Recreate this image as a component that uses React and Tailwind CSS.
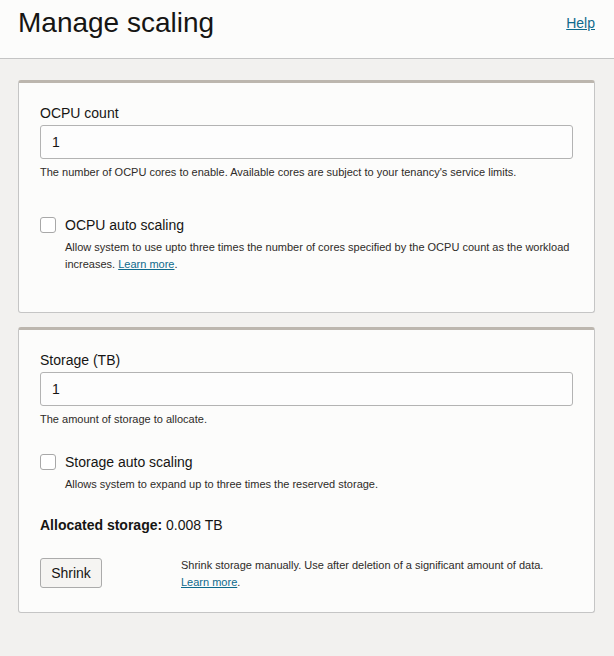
import React from "react";

function Checkbox() {
  return (
    <span className="block w-[16px] h-[16px] shrink-0 rounded-[3px] border border-[#a8a8a8] bg-white" />
  );
}

export default function App() {
  return (
    <div className="min-h-[656px] bg-[#f2f1ef] font-['Liberation_Sans',Arial,sans-serif] text-[#161513]">
      <header className="h-[59px] bg-[#fcfcfb] border-b border-[#c4c4c4] flex justify-between items-start pl-[18px] pr-[19px] pt-[7px]">
        <h1 className="text-[28px] leading-[32px] font-normal">Manage scaling</h1>
        <a href="#" className="mt-[6px] text-[14px] leading-[20px] underline text-[#0f6a8c]">
          Help
        </a>
      </header>

      <main className="pl-[18px] pr-[19px] pt-[21px]">
        <section className="bg-[#fcfcfb] border border-[#c5c5c5] border-t-[3px] border-t-[#bcb6ae] rounded-[3px] px-[21px] pt-[20px] pb-[39px]">
          <label className="block text-[14px] leading-[20px]">OCPU count</label>
          <div className="mt-[2px] h-[34px] rounded-[3px] border border-[#b3b3b3] bg-[#fdfdfd] flex items-center pl-[11px] text-[14px]">
            1
          </div>
          <p className="mt-[5px] text-[11px] leading-[17px] text-[#2e2b28]">
            The number of OCPU cores to enable. Available cores are subject to your tenancy's service limits.
          </p>
          <div className="mt-[34px] flex items-center gap-[9px] text-[14px] leading-[20px]">
            <Checkbox />
            <span>OCPU auto scaling</span>
          </div>
          <p className="mt-[4px] pl-[25px] text-[11px] leading-[17px] text-[#2e2b28]">
            Allow system to use upto three times the number of cores specified by the OCPU count as the workload increases.{" "}
            <a href="#" className="underline text-[#0f6a8c]">Learn more</a>.
          </p>
        </section>

        <section className="mt-[14px] bg-[#fcfcfb] border border-[#c5c5c5] border-t-[3px] border-t-[#bcb6ae] rounded-[3px] px-[21px] pt-[20px] pb-[21px]">
          <label className="block text-[14px] leading-[20px]">Storage (TB)</label>
          <div className="mt-[2px] h-[34px] rounded-[3px] border border-[#b3b3b3] bg-[#fdfdfd] flex items-center pl-[11px] text-[14px]">
            1
          </div>
          <p className="mt-[5px] text-[11px] leading-[17px] text-[#2e2b28]">
            The amount of storage to allocate.
          </p>
          <div className="mt-[24px] flex items-center gap-[9px] text-[14px] leading-[20px]">
            <Checkbox />
            <span>Storage auto scaling</span>
          </div>
          <p className="mt-[4px] pl-[25px] text-[11px] leading-[17px] text-[#2e2b28]">
            Allows system to expand up to three times the reserved storage.
          </p>
          <p className="mt-[22px] text-[14px] leading-[20px]">
            <span className="font-bold">Allocated storage:</span> 0.008 TB
          </p>
          <div className="mt-[22px] flex items-start">
            <div className="w-[141px] shrink-0 pt-[1px]">
              <button className="w-[62px] h-[30px] rounded-[3px] border border-[#ababab] bg-[#f5f4f2] text-[14px] text-[#161513]">
                Shrink
              </button>
            </div>
            <p className="text-[11px] leading-[17px] text-[#2e2b28]">
              Shrink storage manually. Use after deletion of a significant amount of data.{" "}
              <a href="#" className="underline text-[#0f6a8c]">Learn more</a>.
            </p>
          </div>
        </section>
      </main>
    </div>
  );
}
